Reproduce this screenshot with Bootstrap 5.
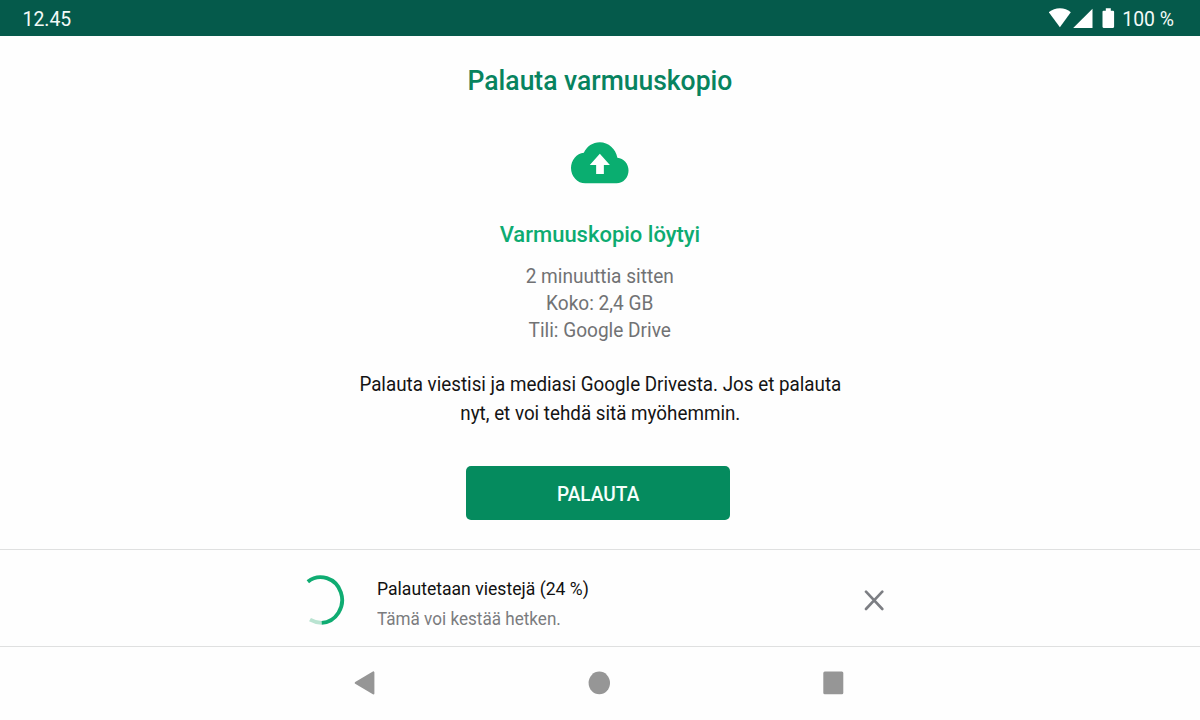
<!DOCTYPE html>
<html lang="fi">
<head>
<meta charset="utf-8">
<meta name="viewport" content="width=device-width, initial-scale=1">
<title>Palauta varmuuskopio</title>
<link href="https://cdn.jsdelivr.net/npm/bootstrap@5.3.0/dist/css/bootstrap.min.css" rel="stylesheet">
<style>
body{font-family:Roboto,sans-serif;background:#fefefe;color:#111;height:720px;overflow:hidden}
svg{display:block;flex:none}
.status-bar{height:36px;background:#055a4b;color:#f4faf8;font-size:19.4px;line-height:39px;padding:0 26px 0 22.5px}
.status-icons{padding-top:8px}
.status-pct{margin-left:7px}
.restore-main{height:513px;padding-top:26px}
.restore-title{font-size:28px;line-height:37px;font-weight:500;color:#08835f;transform:scaleX(.946)}
.cloud{margin-top:43.400px}
.found{font-size:22.8px;line-height:30px;font-weight:500;color:#0dab71;margin-top:36.600px;transform:scaleX(.965)}
.meta{font-size:20px;line-height:27.33px;color:#717274;margin-top:12.800px;transform:scaleX(.953)}
.hint{font-size:20px;line-height:29.5px;color:#141414;margin-top:24.900px;transform:scaleX(.94)}
.btn-restore{width:263.5px;height:53.5px;margin:37.400px 4px 0 0;border:0;border-radius:5px;background:#058b5e;color:#f5fffb;font-size:20px;font-weight:500;line-height:30px;padding:3px 0 0}
.btn-restore:hover{background:#047b53;color:#fff}
.btn-restore span{transform:scaleX(.955)}
.progress-row{height:98px;border-top:1px solid #dfe0e0;border-bottom:1px solid #dfe0e0;padding-left:306px;padding-right:316px}
.msg{margin-left:31px;padding-top:24px}
.msg-a{font-size:18.8px;line-height:30px;color:#111;transform:scaleX(.937);transform-origin:left}
.msg-b{font-size:18.4px;line-height:30px;color:#7b7c7e;transform:scaleX(.93);transform-origin:left}
.nav-keys{height:73px;padding:0 356px 1px 354px}
</style>
</head>
<body>
<header class="status-bar d-flex justify-content-between">
  <span>12.45</span>
  <div class="d-flex">
    <svg class="status-icons" width="66" height="36" viewBox="0 0 66 28" preserveAspectRatio="xMinYMin meet" fill="#fff">
      <path d="M-.2 4.200C3 1.500 6.700.2 10.900.2s7.900 1.300 10.900 4L10.900 19.200z"/>
      <path d="M43.500 .7v19.200H24.200z"/>
      <path d="M56.800.3h5v2.400h2.200q1.100 0 1.100 1.100V18.800q0 1.100-1.100 1.100h-9.400q-1.100 0-1.100-1.100V3.800q0-1.100 1.100-1.100h2.200z"/>
    </svg>
    <span class="status-pct">100 %</span>
  </div>
</header>

<main class="restore-main d-flex flex-column align-items-center text-center text-nowrap">
  <h1 class="restore-title mb-0">Palauta varmuuskopio</h1>
  <svg class="cloud" width="58" height="41" viewBox="0 -1 173 123" preserveAspectRatio="none" overflow="visible">
    <path transform="scale(7.150 7.688) translate(0 -4)" fill="#0aae70" d="M19.350 10.040C18.670 6.590 15.640 4 12 4 9.110 4 6.600 5.640 5.350 8.040 2.340 8.360 0 10.910 0 14c0 3.310 2.690 6 6 6h13c2.760 0 5-2.240 5-5 0-2.640-2.050-4.780-4.650-4.960z"/>
    <path fill="#fff" d="M86 34l30 34H98v27H75V68H56z"/>
  </svg>
  <h2 class="found mb-0">Varmuuskopio löytyi</h2>
  <div class="meta">2 minuuttia sitten<br>Koko: 2,4 GB<br>Tili: Google Drive</div>
  <p class="hint mb-0">Palauta viestisi ja mediasi Google Drivesta. Jos et palauta<br>nyt, et voi tehdä sitä myöhemmin.</p>
  <button type="button" class="btn btn-restore d-flex align-items-center justify-content-center"><span>PALAUTA</span></button>
</main>

<section class="progress-row d-flex align-items-start justify-content-between text-nowrap">
  <div class="d-flex align-items-start">
    <svg class="mt-4" width="40" height="52" viewBox="50 100 120 156" fill="none" stroke-width="11.500">
      <path stroke="#b9e3d1" d="M97 246.500Q78 246 62 237"/>
      <path stroke="#0fac72" d="M55.500 123A64.500 68.500 0 1 1 97 246.500"/>
    </svg>
    <div class="msg">
      <div class="msg-a">Palautetaan viestejä (24 %)</div>
      <div class="msg-b">Tämä voi kestää hetken.</div>
    </div>
  </div>
  <svg class="align-self-center mt-1" width="20" height="21" viewBox="0 0 20 21" stroke="#7c7e83" stroke-width="2.600" stroke-linecap="round"><path d="M2 1.700l16.300 17.300M18.300 1.700L2 19"/></svg>
</section>

<nav class="nav-keys d-flex align-items-center justify-content-between" aria-label="Navigointi">
  <svg width="21" height="25" viewBox="0 0 21 25"><path fill="#969696" stroke="#969696" stroke-width="2" stroke-linejoin="round" d="M1.700 11.900L19.400 1.400v21z"/></svg>
  <svg width="22" height="25" viewBox="0 0 22 25"><ellipse cx="11.300" cy="11.900" rx="10.700" ry="11.300" fill="#969696"/></svg>
  <svg width="21" height="25" viewBox="0 0 21 25"><rect x=".3" y=".5" width="20" height="22.700" rx="1.500" fill="#969696"/></svg>
</nav>
<script src="https://cdn.jsdelivr.net/npm/bootstrap@5.3.0/dist/js/bootstrap.bundle.min.js"></script>
</body>
</html>
